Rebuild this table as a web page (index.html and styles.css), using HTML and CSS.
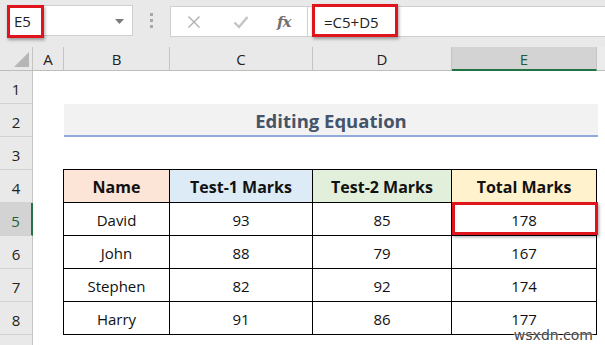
FILE: index.html
```html
<!DOCTYPE html>
<html>
<head>
<meta charset="utf-8">
<link rel="stylesheet" href="styles.css">
</head>
<body>
<div class="app">
  <div class="toolbar">
    <div class="namebox">
      <span class="name">E5</span>
      <svg class="caret" width="9" height="5" viewBox="0 0 9 5"><path d="M0 0h9L4.5 5z" fill="#7a7a7a"/></svg>
      <div class="redbox name-red"></div>
    </div>
    <div class="dots"><i></i><i></i><i></i></div>
    <div class="fxbox">
      <svg class="ico" width="14" height="14" viewBox="0 0 14 14"><path d="M1.5 1.5l11 11M12.5 1.5l-11 11" stroke="#b0b0b0" stroke-width="1.4"/></svg>
      <svg class="ico" width="16" height="14" viewBox="0 0 16 14"><path d="M1.5 7.5l4.5 4.5L14.5 2" stroke="#c4c4c4" stroke-width="2.4" fill="none"/></svg>
      <span class="fx">fx</span>
    </div>
    <div class="formula">
      <span class="ftext">=C5+D5</span>
      <div class="redbox formula-red"></div>
    </div>
  </div>
  <div class="sheet">
    <div class="corner"><span class="tri"></span></div>
    <div class="colh">A</div>
    <div class="colh">B</div>
    <div class="colh">C</div>
    <div class="colh">D</div>
    <div class="colh sel">E</div>
    <div class="colh last"></div>

    <div class="rowh r1">1</div>
    <div class="rowh r2">2</div>
    <div class="rowh r3">3</div>
    <div class="rowh r4">4</div>
    <div class="rowh r5 sel">5</div>
    <div class="rowh r6">6</div>
    <div class="rowh r7">7</div>
    <div class="rowh r8">8</div>
    <div class="rowh r9"></div>

    <div class="title">Editing Equation</div>

    <table class="marks">
      <colgroup><col class="c1"><col class="c2"><col class="c3"><col class="c4"></colgroup>
      <tr class="head">
        <th class="h-name">Name</th>
        <th class="h-t1">Test-1 Marks</th>
        <th class="h-t2">Test-2 Marks</th>
        <th class="h-tot">Total Marks</th>
      </tr>
      <tr><td>David</td><td>93</td><td>85</td><td class="active">178<div class="redbox cell-red"></div></td></tr>
      <tr><td>John</td><td>88</td><td>79</td><td>167</td></tr>
      <tr><td>Stephen</td><td>82</td><td>92</td><td>174</td></tr>
      <tr><td>Harry</td><td>91</td><td>86</td><td>177</td></tr>
    </table>
  </div>
  <div class="watermark">wsxdn.com</div>
</div>
</body>
</html>
```

FILE: styles.css
```css
html, body {
  margin: 0;
  padding: 0;
  background: #ffffff;
}
.app {
  position: relative;
  width: 605px;
  height: 345px;
  overflow: hidden;
  font-family: "Open Sans", sans-serif;
}
.toolbar {
  height: 47px;
  background: #e9e9e9;
  display: flex;
  align-items: flex-start;
  padding: 5px 0 0 7px;
  box-sizing: border-box;
}
.namebox {
  position: relative;
  width: 126px;
  height: 31px;
  background: #fff;
  border: 1px solid #cfcfcf;
  box-sizing: border-box;
  display: flex;
  align-items: center;
  justify-content: space-between;
  padding: 0 8px 0 6px;
}
.name {
  font-family: "Open Sans", sans-serif;
  font-size: 15px;
  color: #222;
}
.caret { margin-top: 1px; }
.redbox {
  position: absolute;
  border: 3px solid #e0141c;
  box-shadow: 1px 2px 3px rgba(0,0,0,0.35);
  box-sizing: border-box;
}
.name-red {
  left: -1px;
  top: -1px;
  width: 37px;
  height: 33px;
}
.dots {
  width: 37px;
  height: 31px;
  display: flex;
  flex-direction: column;
  align-items: center;
  justify-content: center;
  gap: 3px;
}
.dots i {
  width: 3px;
  height: 3px;
  background: #a8a8a8;
  display: block;
}
.fxbox {
  width: 137px;
  height: 31px;
  margin-top: 1px;
  background: #fff;
  border: 1px solid #cfcfcf;
  border-right: none;
  box-sizing: border-box;
  display: flex;
  align-items: center;
  padding-left: 16px;
  gap: 32px;
}
.ico { display: block; }
.fx {
  font-family: "DejaVu Serif", "Liberation Serif", serif;
  font-style: italic;
  font-weight: bold;
  font-size: 15px;
  color: #707070;
  margin-left: -4px;
  letter-spacing: -1px;
}
.formula {
  position: relative;
  flex: 1;
  height: 31px;
  margin-top: 1px;
  background: #fff;
  border: 1px solid #cfcfcf;
  border-right: none;
  box-sizing: border-box;
  display: flex;
  align-items: center;
  padding-left: 16px;
}
.ftext {
  font-family: "Open Sans", sans-serif;
  font-size: 15px;
  color: #222;
}
.formula-red {
  left: 4px;
  top: -3px;
  width: 86px;
  height: 33px;
}
.sheet {
  display: grid;
  grid-template-columns: 33px 31px 106px 143px 139px 145px 1fr;
  grid-template-rows: 24px repeat(8, 33px) 1fr;
  height: 298px;
}
.corner {
  grid-column: 1;
  grid-row: 1;
  background: #e9e9e9;
  border-right: 1px solid #c4c4c4;
  border-bottom: 1px solid #bdbdbd;
  position: relative;
}
.tri {
  position: absolute;
  right: 3px;
  bottom: 3px;
  width: 0;
  height: 0;
  border-left: 15px solid transparent;
  border-bottom: 15px solid #b6b6b6;
}
.colh {
  grid-row: 1;
  background: #e9e9e9;
  border-right: 1px solid #c4c4c4;
  border-bottom: 1px solid #bdbdbd;
  display: flex;
  align-items: center;
  justify-content: center;
  font-family: "Open Sans", sans-serif;
  font-size: 15px;
  color: #222;
  padding-top: 1px;
}
.colh.sel {
  background: #d3d3d3;
  color: #1e5e3b;
  border-bottom: 2px solid #217346;
}
.colh.last {
  background: #ececec;
  border-right: none;
}
.rowh {
  grid-column: 1;
  background: #e9e9e9;
  border-right: 1px solid #c4c4c4;
  border-bottom: 1px solid #d2d2d2;
  display: flex;
  align-items: center;
  justify-content: center;
  font-family: "Open Sans", sans-serif;
  font-size: 15px;
  color: #222;
  padding-top: 4px;
  box-sizing: border-box;
}
.rowh.sel {
  background: #d3d3d3;
  color: #1e5e3b;
  border-right: 2px solid #217346;
}
.r1 { grid-row: 2; }
.r2 { grid-row: 3; }
.r3 { grid-row: 4; }
.r4 { grid-row: 5; }
.r5 { grid-row: 6; }
.r6 { grid-row: 7; }
.r7 { grid-row: 8; }
.r8 { grid-row: 9; }
.r9 { grid-row: 10; border-bottom: none; }

.title {
  grid-column: 3 / 7;
  grid-row: 3;
  background: #f2f2f2;
  border-bottom: 2px solid #8eaadb;
  margin-right: -1px;
  display: flex;
  align-items: center;
  justify-content: center;
  font-family: "Open Sans", sans-serif;
  font-weight: bold;
  font-size: 18.5px;
  color: #44546a;
  padding-top: 2px;
}
.marks {
  grid-column: 3 / 7;
  grid-row: 5 / 10;
  border-collapse: collapse;
  table-layout: fixed;
  width: 534px;
  margin: -1px 0 0 -1px;
  font-family: "Open Sans", sans-serif;
  font-size: 15px;
  color: #111;
}
.c1 { width: 106px; }
.c2 { width: 143px; }
.c3 { width: 139px; }
.c4 { width: 145px; }
.marks th, .marks td {
  border: 1px solid #000;
  height: 32px;
  padding: 2px 0 0 0;
  text-align: center;
  box-sizing: border-box;
}
.marks th {
  font-weight: bold;
  font-size: 16px;
}
.h-name { background: #fce4d6; }
.h-t1 { background: #ddebf7; }
.h-t2 { background: #e2efda; }
.h-tot { background: #fff2cc; }
.active { position: relative; }
.cell-red {
  left: 0;
  top: -1px;
  width: 146px;
  height: 33px;
}
.watermark {
  position: absolute;
  right: 12px;
  bottom: 2px;
  font-family: "DejaVu Sans", sans-serif;
  font-size: 14px;
  color: #444;
  text-shadow: 0 0 2px #fff, 0 0 2px #fff;
}
```
